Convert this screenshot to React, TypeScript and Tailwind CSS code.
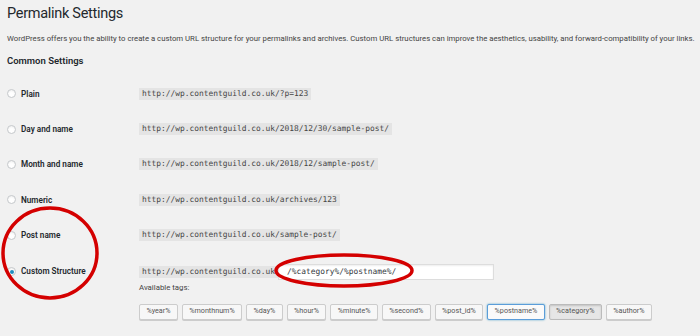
import React from 'react';

const rows = [
  { label: 'Plain', url: 'http://wp.contentguild.co.uk/?p=123' },
  { label: 'Day and name', url: 'http://wp.contentguild.co.uk/2018/12/30/sample-post/' },
  { label: 'Month and name', url: 'http://wp.contentguild.co.uk/2018/12/sample-post/' },
  { label: 'Numeric', url: 'http://wp.contentguild.co.uk/archives/123' },
  { label: 'Post name', url: 'http://wp.contentguild.co.uk/sample-post/' },
];

const tags = ['%year%', '%monthnum%', '%day%', '%hour%', '%minute%', '%second%', '%post_id%', '%postname%', '%category%', '%author%'];

const Radio = ({ checked = false }: { checked?: boolean }) => (
  <span className="flex h-[9px] w-[9px] shrink-0 items-center justify-center rounded-full border border-[#c4c7ca] bg-white shadow-[inset_0_1px_2px_rgba(0,0,0,0.07)]">
    {checked && <span className="h-[4px] w-[4px] rounded-full bg-[#1e8cbe]" />}
  </span>
);

const tagClass = (tag: string) => {
  if (tag === '%postname%')
    return 'border-[#5b9dd9] bg-[#fafafa] shadow-[0_0_2px_rgba(30,140,190,0.8)]';
  if (tag === '%category%')
    return 'border-[#bbb] bg-[#e6e6e6] shadow-[inset_0_1px_2px_rgba(0,0,0,0.15)]';
  return 'border-[#ccc] bg-[#f7f7f7] shadow-[0_1px_0_#ccc]';
};

export default function App() {
  return (
    <div className="relative h-[336px] w-[700px] overflow-hidden bg-[#f1f1f1] px-[7px] font-['Roboto',sans-serif] text-[#23282d]">
      <h1 className="mt-[4px] text-[14.5px] leading-[20px] font-normal tracking-[-0.02em]">Permalink Settings</h1>
      <p className="mt-[10px] whitespace-nowrap text-[7.78px] leading-[10px] text-[#444]">
        WordPress offers you the ability to create a custom URL structure for your permalinks and archives. Custom URL structures can improve the aesthetics, usability, and forward-compatibility of your links.
      </p>
      <h2 className="mt-[11px] text-[9.5px] leading-[12px] font-semibold">Common Settings</h2>

      <div className="mt-[9px]">
        {rows.map((r) => (
          <div key={r.label} className="flex h-[35.4px] items-center">
            <div className="flex w-[132px] items-center gap-[5px]">
              <Radio />
              <span className="text-[8.2px] font-semibold">{r.label}</span>
            </div>
            <code className="bg-[#e4e4e4] px-[3px] py-[2px] font-['DejaVu_Sans_Mono',monospace] text-[7.9px] leading-[8px] text-[#444]">
              {r.url}
            </code>
          </div>
        ))}

        <div className="flex pt-[10.7px]">
          <div className="flex h-[16px] w-[132px] items-center gap-[5px]">
            <Radio checked />
            <span className="text-[8.2px] font-semibold">Custom Structure</span>
          </div>
          <div>
            <div className="flex h-[16px] items-center">
              <code className="bg-[#e4e4e4] px-[3px] py-[2px] font-['DejaVu_Sans_Mono',monospace] text-[7.9px] leading-[8px] text-[#444]">
                http://wp.contentguild.co.uk
              </code>
              <div className="flex h-[16px] w-[216px] items-center border border-[#ddd] bg-white px-[8px] font-['DejaVu_Sans_Mono',monospace] text-[7.9px] text-[#32373c] shadow-[inset_0_1px_2px_rgba(0,0,0,0.07)]">
                /%category%/%postname%/
              </div>
            </div>
            <div className="mt-[3px] text-[7.8px] leading-[10px] text-[#444]">Available tags:</div>
            <div className="mt-[11px] flex gap-[4px]">
              {tags.map((t) => (
                <span
                  key={t}
                  className={`flex h-[16px] items-center rounded-[2px] border px-[6.4px] text-[7.2px] text-[#555] ${tagClass(t)}`}
                >
                  {t}
                </span>
              ))}
            </div>
          </div>
        </div>
      </div>

      <svg className="pointer-events-none absolute inset-0" width="700" height="336">
        <defs>
          <filter id="soft" x="-10%" y="-10%" width="120%" height="120%">
            <feGaussianBlur stdDeviation="0.6" />
          </filter>
        </defs>
        <g filter="url(#soft)" fill="none" stroke="#d40000" strokeWidth="3.5">
          <ellipse cx="50" cy="253" rx="47" ry="45" />
          <ellipse cx="344" cy="270.5" rx="68" ry="15.5" />
        </g>
      </svg>
    </div>
  );
}
